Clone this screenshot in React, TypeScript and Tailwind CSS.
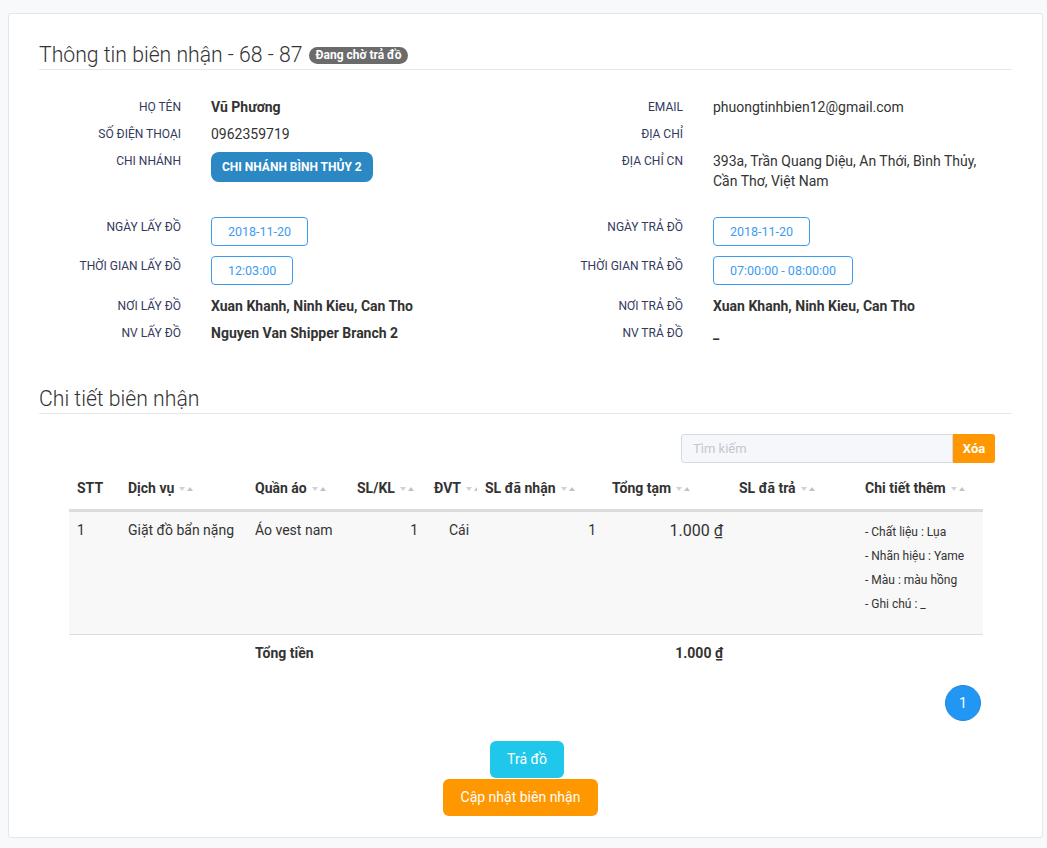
import React from "react";

const font = { fontFamily: "Roboto, 'Noto Sans', sans-serif" };

function SortIcon() {
  return (
    <svg width="14" height="6" viewBox="0 0 14 6" className="inline-block ml-[5px] align-middle">
      <polygon points="0,1 6,1 3,5" fill="#cfd3d8" />
      <polygon points="8,5 14,5 11,1" fill="#bfc4ca" />
    </svg>
  );
}

function Label({ children }: { children: React.ReactNode }) {
  return (
    <div className="w-[142px] shrink-0 text-right text-[12px] leading-[20px] text-[#34395e] uppercase">
      {children}
    </div>
  );
}

function Row({
  l,
  lv,
  r,
  rv,
  className = "",
}: {
  l: React.ReactNode;
  lv: React.ReactNode;
  r: React.ReactNode;
  rv: React.ReactNode;
  className?: string;
}) {
  return (
    <div className={"flex " + className}>
      <div className="flex w-[502px] shrink-0">
        <Label>{l}</Label>
        <div className="ml-[30px] text-[14px] leading-[20px] text-[#333]">{lv}</div>
      </div>
      <div className="flex flex-1">
        <Label>{r}</Label>
        <div className="ml-[30px] w-[280px] text-[14px] leading-[20px] text-[#333]">{rv}</div>
      </div>
    </div>
  );
}

function DateBox({ children }: { children: React.ReactNode }) {
  return (
    <div className="inline-block h-[29px] rounded-[4px] border border-[#3d9cf0] px-[16px] text-[12.5px] leading-[27px] text-[#3d9cf0]">
      {children}
    </div>
  );
}

const cols = [
  { name: "STT", w: 51, sort: false },
  { name: "Dịch vụ", w: 127, sort: true },
  { name: "Quần áo", w: 102, sort: true },
  { name: "SL/KL", w: 77, sort: true },
  { name: "ĐVT", w: 51, sort: true },
  { name: "SL đã nhận", w: 127, sort: true },
  { name: "Tổng tạm", w: 127, sort: true },
  { name: "SL đã trả", w: 126, sort: true },
  { name: "Chi tiết thêm", w: 126, sort: true },
];

export default function App() {
  return (
    <div className="min-h-[848px] bg-[#f8f9fb] pt-[13px] px-[8px] pb-[10px]" style={font}>
      <div className="w-[1035px] rounded-[3px] border border-[#e3e6ea] bg-white px-[30px] pt-[27px] pb-[21px]">
        {/* Title */}
        <div className="flex items-center border-b border-[#e5e7ea]">
          <h2 className="text-[21.2px] leading-[28px] font-light text-[#333]">Thông tin biên nhận - 68 - 87</h2>
          <span className="ml-[6px] inline-block h-[17px] rounded-full bg-[#6b6b6b] px-[7px] text-[12px] font-bold leading-[17px] text-white">
            Đang chờ trả đồ
          </span>
        </div>

        {/* Info */}
        <div className="mt-[27px]">
          <Row l="Họ tên" lv={<span className="font-bold">Vũ Phương</span>} r="Email" rv="phuongtinhbien12@gmail.com" className="mb-[7px]" />
          <Row l="Số điện thoại" lv="0962359719" r="Địa chỉ" rv="" className="mb-[7px]" />
          <Row
            l="Chi nhánh"
            lv={
              <span className="mt-[1px] inline-block h-[30px] rounded-[8px] bg-[#2b88c3] px-[11px] text-[12px] font-bold leading-[30px] text-white">
                CHI NHÁNH BÌNH THỦY 2
              </span>
            }
            r="Địa chỉ CN"
            rv="393a, Trần Quang Diệu, An Thới, Bình Thủy, Cần Thơ, Việt Nam"
          />

          <Row
            l="Ngày lấy đồ"
            lv={<DateBox>2018-11-20</DateBox>}
            r="Ngày trả đồ"
            rv={<DateBox>2018-11-20</DateBox>}
            className="mt-[26px] mb-[10px]"
          />
          <Row
            l="Thời gian lấy đồ"
            lv={<DateBox>12:03:00</DateBox>}
            r="Thời gian trả đồ"
            rv={<DateBox>07:00:00 - 08:00:00</DateBox>}
            className="mb-[11px]"
          />
          <Row
            l="Nơi lấy đồ"
            lv={<span className="font-bold">Xuan Khanh, Ninh Kieu, Can Tho</span>}
            r="Nơi trả đồ"
            rv={<span className="font-bold">Xuan Khanh, Ninh Kieu, Can Tho</span>}
            className="mb-[7px]"
          />
          <Row
            l="NV lấy đồ"
            lv={<span className="font-bold">Nguyen Van Shipper Branch 2</span>}
            r="NV trả đồ"
            rv={<span className="font-bold">_</span>}
          />
        </div>

        {/* Chi tiết */}
        <div className="mt-[42px] border-b border-[#e5e7ea]">
          <h2 className="text-[21.2px] leading-[28px] font-light text-[#333]">Chi tiết biên nhận</h2>
        </div>

        <div className="mt-[20px] flex justify-end pr-[17px]">
          <div className="flex h-[29px]">
            <input
              className="h-[29px] w-[272px] rounded-l-[3px] border border-[#d5dae2] bg-[#f5f7fa] px-[11px] text-[13px] text-[#333] outline-none placeholder:text-[#c3c7ce]"
              placeholder="Tìm kiếm"
              readOnly
            />
            <button className="h-[29px] w-[42px] rounded-r-[3px] bg-[#ff9800] text-[13px] font-bold text-white">Xóa</button>
          </div>
        </div>

        <div className="ml-[30px] w-[914px]">
          <table className="mt-[3px] w-[914px] table-fixed border-collapse text-[14px] text-[#333]">
            <colgroup>
              {cols.map((c) => (
                <col key={c.name} style={{ width: c.w }} />
              ))}
            </colgroup>
            <thead>
              <tr className="border-b-[3px] border-[#dcdcdc]">
                {cols.map((c) => (
                  <th
                    key={c.name}
                    className="overflow-hidden whitespace-nowrap pl-[8px] pt-[12px] pb-[11px] text-left text-[14px] font-bold leading-[20px] text-[#333]"
                  >
                    {c.name}
                    {c.sort && <SortIcon />}
                  </th>
                ))}
              </tr>
            </thead>
            <tbody>
              <tr className="border-b border-[#dddddd] bg-[#f8f8f8] align-top">
                <td className="px-[8px] pt-[8px] leading-[20px]">1</td>
                <td className="px-[8px] pt-[8px] leading-[20px] whitespace-nowrap">Giặt đồ bẩn nặng</td>
                <td className="px-[8px] pt-[8px] leading-[20px]">Áo vest nam</td>
                <td className="px-[8px] pt-[8px] text-right leading-[20px]">1</td>
                <td className="pl-[23px] pt-[8px] leading-[20px]">Cái</td>
                <td className="px-[8px] pt-[8px] text-right leading-[20px]">1</td>
                <td className="px-[8px] pt-[8px] text-right text-[16px] leading-[22px]">1.000 ₫</td>
                <td className="px-[8px] pt-[8px]"></td>
                <td className="px-[8px] pt-[8px] pb-[18px] text-[12px] leading-[24px]">
                  <div>- Chất liệu : Lụa</div>
                  <div>- Nhãn hiệu : Yame</div>
                  <div>- Màu : màu hồng</div>
                  <div>- Ghi chú : _</div>
                </td>
              </tr>
              <tr>
                <td className="py-[8px]"></td>
                <td className="py-[8px]"></td>
                <td className="px-[8px] py-[8px] font-bold leading-[20px]">Tổng tiền</td>
                <td></td>
                <td></td>
                <td></td>
                <td className="px-[8px] py-[8px] text-right font-bold leading-[20px]">1.000 ₫</td>
                <td></td>
                <td></td>
              </tr>
            </tbody>
          </table>

          <div className="mt-[14px] flex justify-end pr-[2px]">
            <div className="flex h-[36px] w-[36px] items-center justify-center rounded-full border border-[#1e88e5] bg-[#2196f3] text-[14px] text-white">
              1
            </div>
          </div>
        </div>

        <div className="mt-[20px] flex flex-col items-center">
          <button className="ml-[3px] h-[37px] rounded-[6px] bg-[#1fc8ea] px-[17px] text-[14px] text-white">Trả đồ</button>
          <button className="mr-[10px] mt-[1px] h-[37px] rounded-[6px] bg-[#ff9800] px-[18px] text-[14px] text-white">Cập nhật biên nhận</button>
        </div>
      </div>
    </div>
  );
}
